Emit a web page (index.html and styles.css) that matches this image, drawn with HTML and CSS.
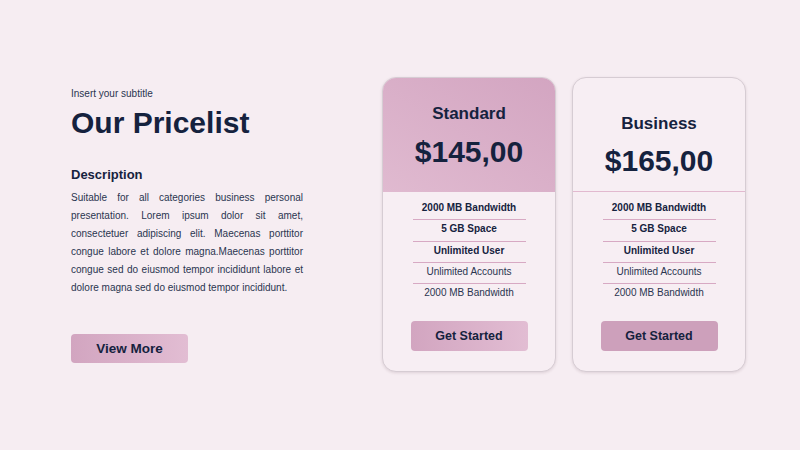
FILE: index.html
```html
<!DOCTYPE html>
<html>
<head>
<meta charset="utf-8">
<link rel="stylesheet" href="styles.css">
</head>
<body>
<main class="page">
  <section class="intro">
    <p class="subtitle">Insert your subtitle</p>
    <h1 class="title">Our Pricelist</h1>
    <h2 class="desc-title">Description</h2>
    <p class="desc">Suitable for all categories business personal presentation. Lorem ipsum dolor sit amet, consectetuer adipiscing elit. Maecenas porttitor congue labore et dolore magna.Maecenas porttitor congue sed do eiusmod tempor incididunt labore et dolore magna sed do eiusmod tempor incididunt.</p>
    <button class="btn view-more">View More</button>
  </section>
  <section class="cards">
    <div class="card">
      <div class="card-head head-standard">
        <div class="plan">Standard</div>
        <div class="price">$145,00</div>
      </div>
      <ul class="features">
        <li class="strong">2000 MB Bandwidth</li>
        <li class="strong">5 GB Space</li>
        <li class="strong">Unlimited User</li>
        <li>Unlimited Accounts</li>
        <li>2000 MB Bandwidth</li>
      </ul>
      <button class="btn get gradient">Get Started</button>
    </div>
    <div class="card">
      <div class="card-head head-business">
        <div class="plan">Business</div>
        <div class="price price-b">$165,00</div>
      </div>
      <ul class="features">
        <li class="strong">2000 MB Bandwidth</li>
        <li class="strong">5 GB Space</li>
        <li class="strong">Unlimited User</li>
        <li>Unlimited Accounts</li>
        <li>2000 MB Bandwidth</li>
      </ul>
      <button class="btn get solid">Get Started</button>
    </div>
  </section>
</main>
</body>
</html>
```
FILE: styles.css
```css
* { box-sizing: border-box; }
html, body {
  margin: 0;
  padding: 0;
  background: #f6edf2;
}
body {
  width: 800px;
  height: 450px;
  overflow: hidden;
  font-family: "Liberation Sans", Arial, sans-serif;
  color: #15223e;
}
.page {
  display: flex;
  padding: 77px 0 0 71px;
}
.intro {
  width: 232px;
  padding-top: 10px;
  display: flex;
  flex-direction: column;
  align-items: flex-start;
}
.subtitle {
  margin: 0;
  font-size: 10px;
  line-height: 14px;
  color: #2a3550;
}
.title {
  margin: 4px 0 0;
  font-size: 30px;
  line-height: 36px;
  font-weight: 700;
}
.desc-title {
  margin: 26px 0 0;
  font-size: 13px;
  line-height: 16px;
  font-weight: 700;
}
.desc {
  margin: 6px 0 0;
  font-size: 10px;
  line-height: 18px;
  text-align: justify;
  color: #2a3550;
}
.btn {
  border: none;
  font-family: inherit;
  color: #15223e;
  font-weight: 700;
  padding: 0;
  cursor: pointer;
}
.view-more {
  margin-top: 37px;
  width: 117px;
  height: 29px;
  border-radius: 4px;
  font-size: 13.5px;
  background: linear-gradient(90deg, #d2a5c0, #e2bdd3);
}
.cards {
  display: flex;
  gap: 16px;
  margin-left: 79px;
}
.card {
  width: 174px;
  height: 295px;
  border: 1px solid #d6ccd3;
  border-radius: 14px;
  background: #f7eef3;
  overflow: hidden;
  box-shadow: 0 1px 3px rgba(80, 40, 60, 0.14);
  display: flex;
  flex-direction: column;
  align-items: center;
}
.card-head {
  width: 100%;
  height: 114px;
  text-align: center;
  flex-shrink: 0;
}
.head-standard {
  padding-top: 26px;
  background: linear-gradient(30deg, #e0bad0, #d3a5c1);
}
.head-business {
  padding-top: 36px;
  border-bottom: 1px solid #e2b9cf;
}
.plan {
  font-size: 17px;
  line-height: 20px;
  font-weight: 700;
}
.price {
  margin-top: 11px;
  font-size: 30px;
  line-height: 34px;
  font-weight: 700;
}
.price-b { margin-top: 10px; }
.features {
  list-style: none;
  margin: 0;
  padding: 7px 0 0;
  width: 113px;
}
.features li {
  font-size: 10px;
  line-height: 18px;
  padding-bottom: 2.25px;
  text-align: center;
  color: #2a3550;
  border-bottom: 1px solid #d7a9c3;
}
.features li:last-child { border-bottom: none; }
.features li.strong {
  font-weight: 700;
  color: #15223e;
}
.get {
  margin-top: 17px;
  width: 117px;
  height: 30px;
  border-radius: 4px;
  font-size: 12.5px;
}
.gradient { background: linear-gradient(90deg, #d2a5c0, #e2bdd3); }
.solid { background: #cda0bb; }
```
